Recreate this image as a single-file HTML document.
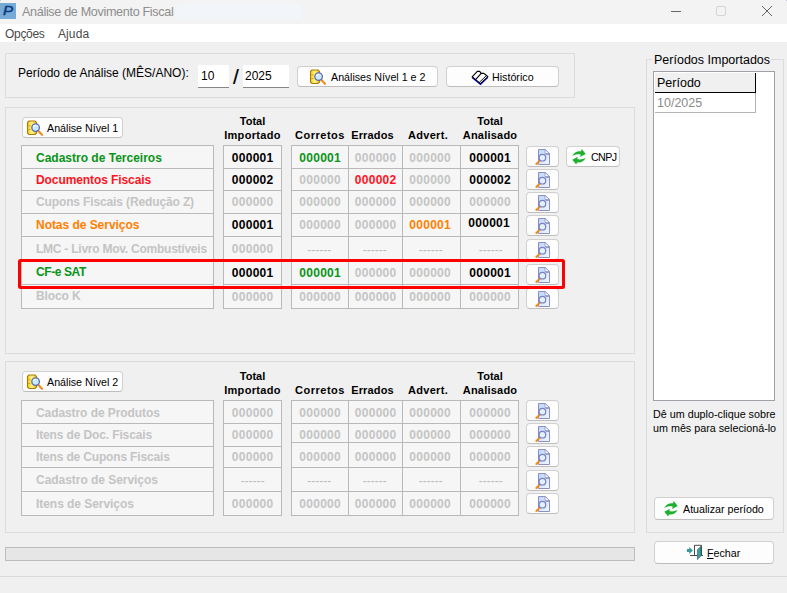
<!DOCTYPE html><html lang="pt-BR"><head><meta charset="utf-8"><title>Análise de Movimento Fiscal</title><style>
*{box-sizing:border-box;margin:0;padding:0}
html,body{width:787px;height:593px;overflow:hidden;background:#f0f0f0}
body{position:relative;font-family:"Liberation Sans",Arial,sans-serif;font-size:11px;color:#000}
.a{position:absolute}
.t{position:absolute;white-space:nowrap}
.gb{position:absolute;border:1px solid #dcdcdc}
.btn{position:absolute;background:#fdfdfd;border:1px solid #d0d0d0;border-bottom-color:#bdbdbd;border-radius:4px}
.tb{position:absolute;border:1px solid #b9b9b9;background:#f6f6f6}
.hl{position:absolute;left:0;right:0;height:1px;background:#b9b9b9}
.vl{position:absolute;top:0;bottom:0;width:1px;background:#b9b9b9}
.n{position:absolute;font-weight:bold;font-size:12px;white-space:nowrap;line-height:14px;height:14px}
.num{position:absolute;font-weight:bold;font-size:12px;white-space:nowrap;line-height:14px;height:14px;text-align:center;letter-spacing:.3px;text-indent:.3px}
.g{color:#089418}.r{color:#ff1424}.o{color:#ff8000}.d{color:#c4c4c4}.k{color:#000}
.hd{position:absolute;font-weight:bold;font-size:11px;line-height:14px;text-align:center;white-space:nowrap}
.bt{position:absolute;white-space:nowrap;font-size:10.7px;line-height:13px;margin-top:1px}
</style></head><body>
<svg width="0" height="0" style="position:absolute"><defs>
<linearGradient id="gy" x1="0" x2="1" y1="0" y2="0"><stop offset="0" stop-color="#f5cc20"/><stop offset=".5" stop-color="#fff48c"/><stop offset="1" stop-color="#f0c020"/></linearGradient>
<linearGradient id="gp" x1="0" x2="1" y1="0" y2="1"><stop offset="0" stop-color="#bcd6fa"/><stop offset="1" stop-color="#f4f7fd"/></linearGradient>
<symbol id="i-db" viewBox="0 0 17 16">
<path d="M1.5 2.5 L3 1 H9 L10.5 2.5 V13 L9 14.5 H3 L1.5 13 Z" fill="url(#gy)" stroke="#ad7b00" stroke-width="1.1"/>
<path d="M2 5.8 H4.6 M2 9.6 H4.6" stroke="#d9a400" stroke-width=".9"/>
<line x1="12.2" y1="10.8" x2="16" y2="14.8" stroke="#f08a1c" stroke-width="2.1" stroke-linecap="round"/>
<circle cx="9.6" cy="7.6" r="3.8" fill="#c9ecfd" stroke="#5f69ad" stroke-width="1.3"/>
<path d="M7.6 6.8 A2.4 2.4 0 0 1 10.2 5.3" stroke="#fff" stroke-width="1.1" fill="none"/>
</symbol>
<symbol id="i-pg" viewBox="0 0 16 18">
<path d="M3.5 1.5 H10 L14.5 5.5 V16.5 H3.5 Z" fill="url(#gp)" stroke="#8a8fc6" stroke-width="1"/>
<path d="M10 1.5 V5.5 H14.5 Z" fill="#fff" stroke="#8a8fc6" stroke-width=".8"/>
<path d="M10.6 5.9 H14 V7 H10.6Z" fill="#93a4b8"/>
<line x1="4.8" y1="12.6" x2="1.4" y2="16" stroke="#f08a1c" stroke-width="2" stroke-linecap="round"/>
<circle cx="7.4" cy="9.7" r="3.3" fill="#e4f0fc" stroke="#7a80c4" stroke-width="1.2"/>
</symbol>
<symbol id="i-rf" viewBox="0 0 14 16">
<path d="M0.4 6.9 C1.8 3.2 5.4 1.7 9 2.3 L9.8 0.1 L13.7 5 L8.1 7.9 L8.7 5.6 C6 4.9 3 5.3 0.4 6.9Z" fill="#20b030"/>
<path d="M0.4 6.9 C1.8 3.2 5.4 1.7 9 2.3 L9.8 0.1 L13.7 5 L8.1 7.9 L8.7 5.6 C6 4.9 3 5.3 0.4 6.9Z" fill="#20b030" transform="rotate(180 7 7.85)"/>
</symbol>
<symbol id="i-bk" viewBox="0 0 18 16">
<path d="M1.1 7.6 L9.5 14.4 L16.9 7.4" stroke="#0000ff" stroke-width="1.2" fill="none"/>
<path d="M1.1 6.8 L6.3 1.4 H8.7 L10.2 3.4 H12.8 L14.3 4.5 L16.9 6.6 L9.5 13.6 Z" fill="#fff" stroke="#000" stroke-width="1.1" stroke-linejoin="round"/>
<path d="M10.2 3.4 L4.8 9.3" stroke="#000" stroke-width="1.1"/>
<path d="M15.3 5.7 L8.2 12.5" stroke="#000" stroke-width=".9"/>
</symbol>
<symbol id="i-dr" viewBox="0 0 17 16">
<path d="M8.5 11.4 V1.3 H15.5 V11.4" fill="#fff" stroke="#4a4a4a" stroke-width="1"/>
<path d="M4 11.5 H17" stroke="#4a4a4a" stroke-width="1"/>
<path d="M11.4 5.7 L15 2.3 V11.8 L11.4 15.6Z" fill="#3a9c9c" stroke="#2c5a5e" stroke-width=".6"/>
<path d="M0.9 5 H3.2 V3.1 L6.9 6.5 L3.2 10 V8 H0.9Z" fill="#3a9a9a"/>
</symbol>
</defs></svg>
<div class="a" style="left:0;top:0;width:787px;height:24px;background:#f3f3f3"></div>
<div class="a" style="left:0;top:3px;width:16px;height:16px;background:#78aad6;overflow:hidden"><span class="t" style="left:3px;top:0px;font:italic 13.5px/16px 'Liberation Sans',sans-serif;color:#0d3b82;-webkit-text-stroke:.5px #0d3b82;transform:scaleX(1.12);transform-origin:0 0">P</span></div>
<div class="t" style="left:22px;top:4px;font-size:12.6px;line-height:16px;color:#8d8d8d;letter-spacing:-0.33px">Análise de Movimento Fiscal</div>
<div class="a" style="left:176px;top:4px;width:127px;height:15px;border-radius:8px;background:#f2f5fa"></div>
<div class="a" style="left:786px;top:0;width:1px;height:1px;background:#c9cdd8"></div><div class="a" style="left:0;top:0;width:1px;height:1px;background:#c9cdd8"></div>
<svg class="a" style="left:660px;top:0" width="127" height="24"><path d="M11 11.5H21" stroke="#666" stroke-width="1"/><rect x="56.5" y="6.5" width="9" height="9" rx="1.5" fill="none" stroke="#d4d4d4"/><path d="M102 6 L112 16 M112 6 L102 16" stroke="#666" stroke-width="1"/></svg>
<div class="a" style="left:0;top:24px;width:787px;height:18px;background:#fff"></div>
<div class="t" style="left:5px;top:26px;font-size:12px;line-height:16px;color:#4a4a4a;letter-spacing:-0.3px">Opções</div>
<div class="t" style="left:58px;top:26px;font-size:12px;line-height:16px;color:#4a4a4a;letter-spacing:0.1px">Ajuda</div>
<div class="gb" style="left:5px;top:53px;width:570px;height:45px"></div>
<div class="t" style="left:18px;top:66px;font-size:12px;line-height:14px">Período de Análise (MÊS/ANO):</div>
<div class="a" style="left:198px;top:65px;width:31px;height:23px;background:#fff;border-bottom:1px solid #868686"></div>
<div class="t" style="left:201px;top:69px;font-size:12px;line-height:14px">10</div>
<div class="t" style="left:233px;top:65px;font-size:21px;line-height:24px;-webkit-text-stroke:.2px #000">/</div>
<div class="a" style="left:243px;top:65px;width:46px;height:23px;background:#fff;border-bottom:1px solid #868686"></div>
<div class="t" style="left:245px;top:69px;font-size:12px;line-height:14px">2025</div>
<div class="btn" style="left:297px;top:66px;width:141px;height:21px"></div>
<svg class="a" style="left:309px;top:69px" width="17" height="16"><use href="#i-db"/></svg>
<div class="bt" style="left:331px;top:70px">Análises Nível 1 e 2</div>
<div class="btn" style="left:446px;top:66px;width:113px;height:21px"></div>
<svg class="a" style="left:471px;top:70px" width="18" height="16"><use href="#i-bk"/></svg>
<div class="bt" style="left:492px;top:70px">Histórico</div>
<div class="gb" style="left:5px;top:107px;width:630px;height:247px"></div>
<div class="btn" style="left:22px;top:117px;width:101px;height:21px"></div>
<svg class="a" style="left:26px;top:120px" width="17" height="16"><use href="#i-db"/></svg>
<div class="bt" style="left:47px;top:121px">Análise Nível 1</div>
<div class="hd" style="left:192.5px;width:120px;top:114px">Total<br><span style="letter-spacing:.33px">Importado</span></div>
<div class="hd" style="left:260px;width:120px;top:128px"><span style="letter-spacing:.5px">Corretos</span></div>
<div class="hd" style="left:312.5px;width:120px;top:128px"><span style="letter-spacing:.15px">Errados</span></div>
<div class="hd" style="left:368px;width:120px;top:128px"><span style="letter-spacing:.3px">Advert.</span></div>
<div class="hd" style="left:430px;width:120px;top:114px">Total<br><span style="letter-spacing:.22px">Analisado</span></div>
<div class="tb" style="left:21px;top:145px;width:193px;height:164px"><div class="hl" style="top:22px"></div><div class="hl" style="top:44px"></div><div class="hl" style="top:67px"></div><div class="hl" style="top:90px"></div><div class="hl" style="top:114px"></div><div class="hl" style="top:138px"></div></div>
<div class="tb" style="left:223px;top:145px;width:59px;height:164px"><div class="hl" style="top:22px"></div><div class="hl" style="top:44px"></div><div class="hl" style="top:67px"></div><div class="hl" style="top:90px"></div><div class="hl" style="top:114px"></div><div class="hl" style="top:138px"></div></div>
<div class="tb" style="left:291px;top:145px;width:228px;height:164px"><div class="hl" style="top:22px"></div><div class="hl" style="top:44px"></div><div class="hl" style="top:67px"></div><div class="hl" style="top:90px"></div><div class="hl" style="top:114px"></div><div class="hl" style="top:138px"></div><div class="vl" style="left:56px"></div><div class="vl" style="left:110px"></div><div class="vl" style="left:168px"></div></div>
<div class="n g" style="left:36px;top:151px">Cadastro de Terceiros</div>
<div class="num k" style="left:223px;width:59px;top:151px">000001</div>
<div class="num g" style="left:291px;width:58px;top:151px">000001</div>
<div class="num d" style="left:348px;width:55px;top:151px">000000</div>
<div class="num d" style="left:400.5px;width:59px;top:151px">000000</div>
<div class="num k" style="left:460.5px;width:59px;top:151px">000001</div>
<div class="n r" style="left:36px;top:173px;letter-spacing:-0.09px">Documentos Fiscais</div>
<div class="num k" style="left:223px;width:59px;top:173px">000002</div>
<div class="num d" style="left:291px;width:58px;top:173px">000000</div>
<div class="num r" style="left:348px;width:55px;top:173px">000002</div>
<div class="num d" style="left:400.5px;width:59px;top:173px">000000</div>
<div class="num k" style="left:460.5px;width:59px;top:173px">000002</div>
<div class="n d" style="left:36px;top:195px;letter-spacing:-0.13px">Cupons Fiscais (Redução Z)</div>
<div class="num d" style="left:223px;width:59px;top:195px">000000</div>
<div class="num d" style="left:291px;width:58px;top:195px">000000</div>
<div class="num d" style="left:348px;width:55px;top:195px">000000</div>
<div class="num d" style="left:400.5px;width:59px;top:195px">000000</div>
<div class="num d" style="left:460.5px;width:59px;top:195px">000000</div>
<div class="n o" style="left:36px;top:218px;letter-spacing:-0.04px">Notas de Serviços</div>
<div class="num k" style="left:223px;width:59px;top:218px">000001</div>
<div class="num d" style="left:291px;width:58px;top:218px">000000</div>
<div class="num d" style="left:348px;width:55px;top:218px">000000</div>
<div class="num o" style="left:400.5px;width:59px;top:218px">000001</div>
<div class="num k" style="left:459.5px;width:59px;top:216px">000001</div>
<div class="n d" style="left:36px;top:242px;letter-spacing:-0.24px">LMC - Livro Mov. Combustíveis</div>
<div class="num d" style="left:223px;width:59px;top:242px">000000</div>
<div class="num d" style="left:290px;width:58px;top:243px;font-weight:normal;letter-spacing:0;color:#bbb">------</div>
<div class="num d" style="left:347px;width:55px;top:243px;font-weight:normal;letter-spacing:0;color:#bbb">------</div>
<div class="num d" style="left:401px;width:59px;top:243px;font-weight:normal;letter-spacing:0;color:#bbb">------</div>
<div class="num d" style="left:461px;width:59px;top:243px;font-weight:normal;letter-spacing:0;color:#bbb">------</div>
<div class="n g" style="left:36px;top:265px;letter-spacing:-0.4px">CF-e SAT</div>
<div class="num k" style="left:223px;width:59px;top:266px">000001</div>
<div class="num g" style="left:291px;width:58px;top:266px">000001</div>
<div class="num d" style="left:348px;width:55px;top:266px">000000</div>
<div class="num d" style="left:400.5px;width:59px;top:266px">000000</div>
<div class="num k" style="left:460.5px;width:59px;top:266px">000001</div>
<div class="n d" style="left:36px;top:289px;letter-spacing:-0.1px">Bloco K</div>
<div class="num d" style="left:223px;width:59px;top:290px">000000</div>
<div class="num d" style="left:291px;width:58px;top:290px">000000</div>
<div class="num d" style="left:348px;width:55px;top:290px">000000</div>
<div class="num d" style="left:400.5px;width:59px;top:290px">000000</div>
<div class="num d" style="left:460.5px;width:59px;top:290px">000000</div>
<div class="btn" style="left:526px;top:146px;width:33px;height:21px"></div>
<svg class="a" style="left:535px;top:148px" width="16" height="18"><use href="#i-pg"/></svg>
<div class="btn" style="left:526px;top:169px;width:33px;height:21px"></div>
<svg class="a" style="left:535px;top:171px" width="16" height="18"><use href="#i-pg"/></svg>
<div class="btn" style="left:526px;top:192px;width:33px;height:21px"></div>
<svg class="a" style="left:535px;top:194px" width="16" height="18"><use href="#i-pg"/></svg>
<div class="btn" style="left:526px;top:215px;width:33px;height:21px"></div>
<svg class="a" style="left:535px;top:217px" width="16" height="18"><use href="#i-pg"/></svg>
<div class="btn" style="left:526px;top:239px;width:33px;height:21px"></div>
<svg class="a" style="left:535px;top:241px" width="16" height="18"><use href="#i-pg"/></svg>
<div class="btn" style="left:526px;top:264px;width:33px;height:21px"></div>
<svg class="a" style="left:535px;top:266px" width="16" height="18"><use href="#i-pg"/></svg>
<div class="btn" style="left:526px;top:288px;width:33px;height:21px"></div>
<svg class="a" style="left:535px;top:290px" width="16" height="18"><use href="#i-pg"/></svg>
<div class="btn" style="left:566px;top:146px;width:54px;height:21px"></div><svg class="a" style="left:572px;top:149px" width="14" height="16"><use href="#i-rf"/></svg><div class="bt" style="left:591px;top:150px;letter-spacing:-0.6px">CNPJ</div>
<div class="a" style="left:18px;top:259px;width:547px;height:30px;border:3px solid #fe0000;border-radius:2.5px"></div>
<div class="gb" style="left:5px;top:361px;width:630px;height:172px"></div>
<div class="btn" style="left:22px;top:371px;width:101px;height:21px"></div>
<svg class="a" style="left:26px;top:374px" width="17" height="16"><use href="#i-db"/></svg>
<div class="bt" style="left:47px;top:375px">Análise Nível 2</div>
<div class="hd" style="left:192.5px;width:120px;top:369px">Total<br><span style="letter-spacing:.33px">Importado</span></div>
<div class="hd" style="left:260px;width:120px;top:383px"><span style="letter-spacing:.5px">Corretos</span></div>
<div class="hd" style="left:312.5px;width:120px;top:383px"><span style="letter-spacing:.15px">Errados</span></div>
<div class="hd" style="left:368px;width:120px;top:383px"><span style="letter-spacing:.3px">Advert.</span></div>
<div class="hd" style="left:430px;width:120px;top:369px">Total<br><span style="letter-spacing:.22px">Analisado</span></div>
<div class="tb" style="left:21px;top:400px;width:193px;height:116px"><div class="hl" style="top:22px"></div><div class="hl" style="top:45px"></div><div class="hl" style="top:66px"></div><div class="hl" style="top:90px"></div></div>
<div class="tb" style="left:223px;top:400px;width:59px;height:116px"><div class="hl" style="top:22px"></div><div class="hl" style="top:45px"></div><div class="hl" style="top:66px"></div><div class="hl" style="top:90px"></div></div>
<div class="tb" style="left:291px;top:400px;width:228px;height:116px"><div class="hl" style="top:22px"></div><div class="hl" style="top:41px"></div><div class="hl" style="top:66px"></div><div class="hl" style="top:90px"></div><div class="vl" style="left:56px"></div><div class="vl" style="left:110px"></div><div class="vl" style="left:168px"></div></div>
<div class="n d" style="left:36px;top:406px;letter-spacing:-0.08px">Cadastro de Produtos</div>
<div class="num d" style="left:223px;width:59px;top:406px">000000</div>
<div class="num d" style="left:291px;width:58px;top:406px">000000</div>
<div class="num d" style="left:348px;width:55px;top:406px">000000</div>
<div class="num d" style="left:400.5px;width:59px;top:406px">000000</div>
<div class="num d" style="left:460.5px;width:59px;top:406px">000000</div>
<div class="n d" style="left:36px;top:428px;letter-spacing:-0.13px">Itens de Doc. Fiscais</div>
<div class="num d" style="left:223px;width:59px;top:428px">000000</div>
<div class="num d" style="left:291px;width:58px;top:428px">000000</div>
<div class="num d" style="left:348px;width:55px;top:428px">000000</div>
<div class="num d" style="left:400.5px;width:59px;top:428px">000000</div>
<div class="num d" style="left:460.5px;width:59px;top:428px">000000</div>
<div class="n d" style="left:36px;top:450px;letter-spacing:-0.16px">Itens de Cupons Fiscais</div>
<div class="num d" style="left:223px;width:59px;top:450px">000000</div>
<div class="num d" style="left:291px;width:58px;top:450px">000000</div>
<div class="num d" style="left:348px;width:55px;top:450px">000000</div>
<div class="num d" style="left:400.5px;width:59px;top:450px">000000</div>
<div class="num d" style="left:460.5px;width:59px;top:450px">000000</div>
<div class="n d" style="left:36px;top:473px;letter-spacing:-0.04px">Cadastro de Serviços</div>
<div class="num d" style="left:223px;width:59px;top:474px;font-weight:normal;letter-spacing:0;color:#bbb">------</div>
<div class="num d" style="left:290px;width:58px;top:474px;font-weight:normal;letter-spacing:0;color:#bbb">------</div>
<div class="num d" style="left:347px;width:55px;top:474px;font-weight:normal;letter-spacing:0;color:#bbb">------</div>
<div class="num d" style="left:401px;width:59px;top:474px;font-weight:normal;letter-spacing:0;color:#bbb">------</div>
<div class="num d" style="left:461px;width:59px;top:474px;font-weight:normal;letter-spacing:0;color:#bbb">------</div>
<div class="n d" style="left:36px;top:497px;letter-spacing:-0.05px">Itens de Serviços</div>
<div class="num d" style="left:223px;width:59px;top:497px">000000</div>
<div class="num d" style="left:291px;width:58px;top:497px">000000</div>
<div class="num d" style="left:348px;width:55px;top:497px">000000</div>
<div class="num d" style="left:400.5px;width:59px;top:497px">000000</div>
<div class="num d" style="left:460.5px;width:59px;top:497px">000000</div>
<div class="btn" style="left:526px;top:400px;width:33px;height:21px"></div>
<svg class="a" style="left:535px;top:402px" width="16" height="18"><use href="#i-pg"/></svg>
<div class="btn" style="left:526px;top:423px;width:33px;height:21px"></div>
<svg class="a" style="left:535px;top:425px" width="16" height="18"><use href="#i-pg"/></svg>
<div class="btn" style="left:526px;top:446px;width:33px;height:21px"></div>
<svg class="a" style="left:535px;top:448px" width="16" height="18"><use href="#i-pg"/></svg>
<div class="btn" style="left:526px;top:470px;width:33px;height:21px"></div>
<svg class="a" style="left:535px;top:472px" width="16" height="18"><use href="#i-pg"/></svg>
<div class="btn" style="left:526px;top:493px;width:33px;height:21px"></div>
<svg class="a" style="left:535px;top:495px" width="16" height="18"><use href="#i-pg"/></svg>
<div class="a" style="left:5px;top:547px;width:630px;height:14px;background:#e6e6e6;border:1px solid #bcbcbc"></div>
<div class="a" style="left:0;top:576px;width:787px;height:1px;background:#dadada"></div>
<div class="gb" style="left:646px;top:59px;width:138px;height:474px"></div>
<div class="t" style="left:652px;top:53px;padding:0 1px 0 2px;background:#f0f0f0;font-size:12.5px;line-height:15px">Períodos Importados</div>
<div class="a" style="left:653px;top:71px;width:122px;height:330px;background:#fff;border:1px solid #a0a0a8"></div>
<div class="a" style="left:655px;top:73px;width:101px;height:20px;background:#f0f0f0;border-right:1px solid #000;border-bottom:1px solid #000"></div>
<div class="t" style="left:657px;top:76px;font-size:12.5px;line-height:15px">Período</div>
<div class="a" style="left:655px;top:93px;width:101px;height:20px;border-right:1px solid #b4b4b4;border-bottom:1px solid #b4b4b4"></div>
<div class="t" style="left:657px;top:96px;font-size:12.5px;line-height:15px;color:#8a8a8a">10/2025</div>
<div class="t" style="left:653px;top:408px;font-size:10.75px;line-height:13px">Dê um duplo-clique sobre</div>
<div class="t" style="left:653px;top:422px;font-size:10.75px;line-height:13px">um mês para selecioná-lo</div>
<div class="btn" style="left:654px;top:497px;width:120px;height:23px"></div>
<svg class="a" style="left:664px;top:501px" width="14" height="16"><use href="#i-rf"/></svg>
<div class="bt" style="left:683px;top:502px">Atualizar período</div>
<div class="btn" style="left:654px;top:541px;width:120px;height:23px"></div>
<svg class="a" style="left:686px;top:544px" width="17" height="16"><use href="#i-dr"/></svg>
<div class="bt" style="left:707px;top:546px"><span style="text-decoration:underline">F</span>echar</div>
</body></html>
